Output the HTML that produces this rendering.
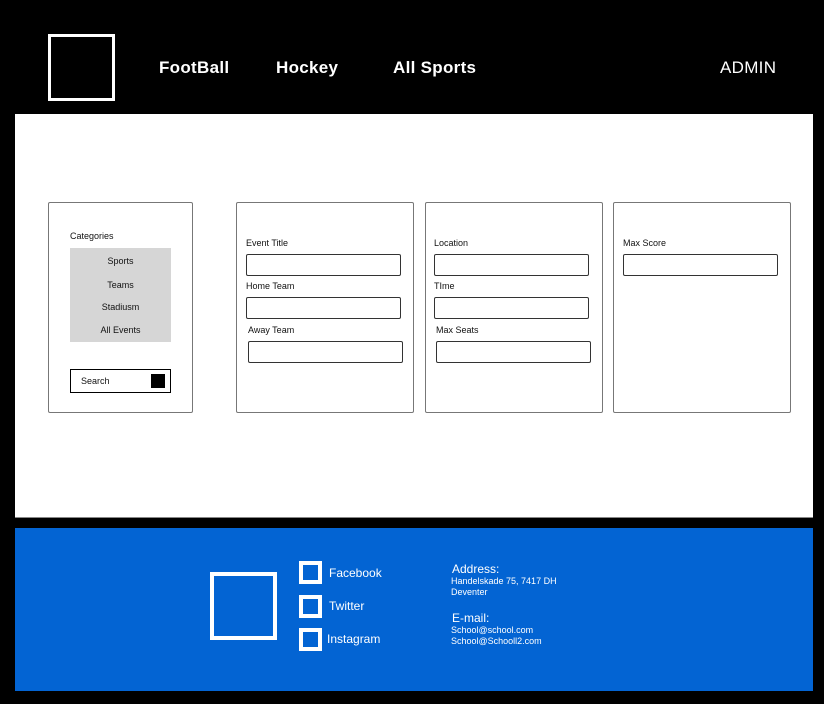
<!DOCTYPE html>
<html><head><meta charset="utf-8"><style>
*{margin:0;padding:0;box-sizing:border-box}
body{width:824px;height:704px;background:#000;position:relative;overflow:hidden;font-family:"Liberation Sans",sans-serif}
.a{position:absolute}
.nav{color:#fff;font-weight:bold;font-size:17px;top:58px}
.card{border:1px solid #777;border-radius:2px;background:#fff}
.lbl{font-size:9px;color:#111}
.inp{border:1px solid #333;border-radius:2px;height:22px;width:155px;background:#fff}
.cat{font-size:9px;color:#111;width:101px;text-align:center}
.f{color:#fff}
.sq{border:4px solid #fff;width:23px;height:23px}
</style></head><body>
<div class="a" style="left:48px;top:34px;width:67px;height:67px;border:3px solid #fff"></div>
<div class="a nav" style="left:159px;letter-spacing:0.3px">FootBall</div>
<div class="a nav" style="left:276px;letter-spacing:0.3px">Hockey</div>
<div class="a nav" style="left:393px;letter-spacing:0.3px">All Sports</div>
<div class="a" style="left:720px;top:58px;color:#fff;font-size:17px;letter-spacing:0.3px">ADMIN</div>

<div class="a" style="left:15px;top:114px;width:798px;height:404px;background:#fff;border-bottom:1px solid #888"></div>

<div class="a card" style="left:48px;top:202px;width:145px;height:211px"></div>
<div class="a lbl" style="left:70px;top:231px">Categories</div>
<div class="a" style="left:70px;top:248px;width:101px;height:94px;background:#d6d6d6"></div>
<div class="a cat" style="left:70px;top:256px">Sports</div>
<div class="a cat" style="left:70px;top:280px">Teams</div>
<div class="a cat" style="left:70px;top:302px">Stadiusm</div>
<div class="a cat" style="left:70px;top:325px">All Events</div>
<div class="a" style="left:70px;top:369px;width:101px;height:24px;border:1px solid #000;background:#fff"></div>
<div class="a lbl" style="left:81px;top:376px">Search</div>
<div class="a" style="left:151px;top:374px;width:14px;height:14px;background:#000"></div>

<div class="a card" style="left:236px;top:202px;width:178px;height:211px"></div>
<div class="a lbl" style="left:246px;top:238px">Event Title</div>
<div class="a inp" style="left:246px;top:254px"></div>
<div class="a lbl" style="left:246px;top:281px">Home Team</div>
<div class="a inp" style="left:246px;top:297px"></div>
<div class="a lbl" style="left:248px;top:325px">Away Team</div>
<div class="a inp" style="left:248px;top:341px"></div>

<div class="a card" style="left:425px;top:202px;width:178px;height:211px"></div>
<div class="a lbl" style="left:434px;top:238px">Location</div>
<div class="a inp" style="left:434px;top:254px"></div>
<div class="a lbl" style="left:434px;top:281px">TIme</div>
<div class="a inp" style="left:434px;top:297px"></div>
<div class="a lbl" style="left:436px;top:325px">Max Seats</div>
<div class="a inp" style="left:436px;top:341px"></div>

<div class="a card" style="left:613px;top:202px;width:178px;height:211px"></div>
<div class="a lbl" style="left:623px;top:238px">Max Score</div>
<div class="a inp" style="left:623px;top:254px"></div>

<div class="a" style="left:15px;top:528px;width:798px;height:163px;background:#0364d3"></div>
<div class="a" style="left:210px;top:572px;width:67px;height:68px;border:4px solid #fff"></div>
<div class="a sq" style="left:299px;top:561px"></div>
<div class="a sq" style="left:299px;top:595px"></div>
<div class="a sq" style="left:299px;top:628px"></div>
<div class="a f" style="left:329px;top:566px;font-size:12px">Facebook</div>
<div class="a f" style="left:329px;top:599px;font-size:12px">Twitter</div>
<div class="a f" style="left:327px;top:632px;font-size:12px">Instagram</div>
<div class="a f" style="left:452px;top:562px;font-size:12px">Address:</div>
<div class="a f" style="left:451px;top:576px;font-size:9px;line-height:11px">Handelskade 75, 7417 DH<br>Deventer</div>
<div class="a f" style="left:452px;top:611px;font-size:12px">E-mail:</div>
<div class="a f" style="left:451px;top:625px;font-size:9px;line-height:11px">School@school.com<br>School@Schooll2.com</div>
</body></html>
